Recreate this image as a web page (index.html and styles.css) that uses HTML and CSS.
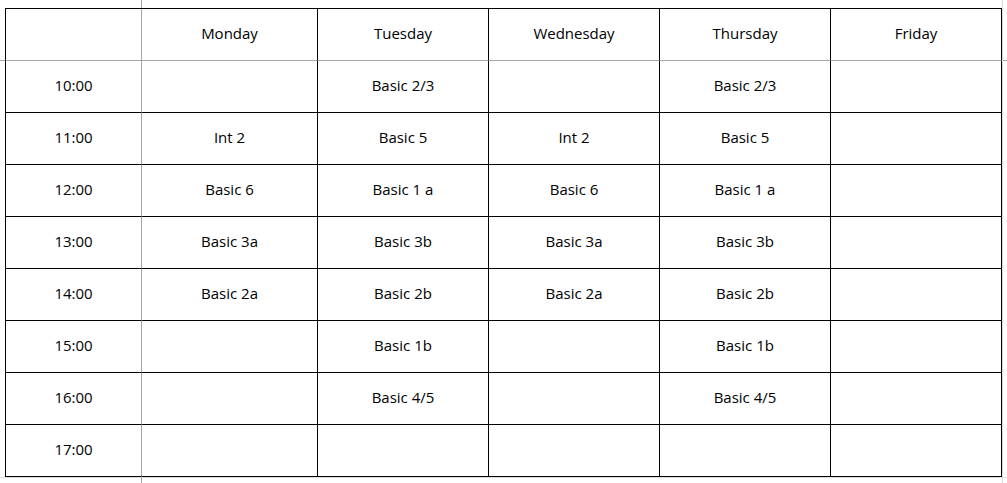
FILE: index.html
```html
<!DOCTYPE html>
<html lang="en">
<head>
<meta charset="utf-8">
<title>Timetable</title>
<link rel="stylesheet" href="styles.css">
</head>
<body>
<div class="sheet">
  <div class="timetable">
    <div class="cell head first"></div>
    <div class="cell head">Monday</div>
    <div class="cell head">Tuesday</div>
    <div class="cell head">Wednesday</div>
    <div class="cell head">Thursday</div>
    <div class="cell head">Friday</div>

    <div class="cell first">10:00</div>
    <div class="cell"></div>
    <div class="cell">Basic 2/3</div>
    <div class="cell"></div>
    <div class="cell">Basic 2/3</div>
    <div class="cell"></div>

    <div class="cell first">11:00</div>
    <div class="cell">Int 2</div>
    <div class="cell">Basic 5</div>
    <div class="cell">Int 2</div>
    <div class="cell">Basic 5</div>
    <div class="cell"></div>

    <div class="cell first">12:00</div>
    <div class="cell">Basic 6</div>
    <div class="cell">Basic 1 a</div>
    <div class="cell">Basic 6</div>
    <div class="cell">Basic 1 a</div>
    <div class="cell"></div>

    <div class="cell first">13:00</div>
    <div class="cell">Basic 3a</div>
    <div class="cell">Basic 3b</div>
    <div class="cell">Basic 3a</div>
    <div class="cell">Basic 3b</div>
    <div class="cell"></div>

    <div class="cell first">14:00</div>
    <div class="cell">Basic 2a</div>
    <div class="cell">Basic 2b</div>
    <div class="cell">Basic 2a</div>
    <div class="cell">Basic 2b</div>
    <div class="cell"></div>

    <div class="cell first">15:00</div>
    <div class="cell"></div>
    <div class="cell">Basic 1b</div>
    <div class="cell"></div>
    <div class="cell">Basic 1b</div>
    <div class="cell"></div>

    <div class="cell first">16:00</div>
    <div class="cell"></div>
    <div class="cell">Basic 4/5</div>
    <div class="cell"></div>
    <div class="cell">Basic 4/5</div>
    <div class="cell"></div>

    <div class="cell first">17:00</div>
    <div class="cell"></div>
    <div class="cell"></div>
    <div class="cell"></div>
    <div class="cell"></div>
    <div class="cell"></div>
  </div>
</div>
</body>
</html>
```

FILE: styles.css
```css
html, body {
  margin: 0;
  padding: 0;
}

body {
  width: 1007px;
  height: 483px;
  overflow: hidden;
  background-color: #ffffff;
  background-image:
    linear-gradient(to right, transparent 141px, #a6a6a6 141px, #a6a6a6 142px, transparent 142px),
    linear-gradient(to right, transparent 1002px, #dcdcdc 1002px, #dcdcdc 1003px, transparent 1003px),
    linear-gradient(to bottom, transparent 60px, #a6a6a6 60px, #a6a6a6 61px, transparent 61px),
    linear-gradient(to bottom, transparent 477px, #e0e0e0 477px, #e0e0e0 478px, transparent 478px);
  font-family: "Open Sans", "Noto Sans", sans-serif;
  font-size: 15px;
  color: #000;
}

.sheet {
  padding: 8px 0 0 5px;
}

.timetable {
  display: grid;
  grid-template-columns: 136px 176px 171px 171px 171px 171px;
  grid-auto-rows: 52px;
  width: max-content;
  border-top: 1px solid #000;
  border-left: 1px solid #000;
  background: #fff;
}

.cell {
  box-sizing: border-box;
  border-right: 1px solid #000;
  border-bottom: 1px solid #000;
  display: flex;
  align-items: center;
  justify-content: center;
  white-space: nowrap;
  line-height: 1;
  padding-bottom: 3px;
}

.cell.first {
  border-right-color: #a6a6a6;
}

.cell.head {
  border-bottom-color: #a6a6a6;
}
```
